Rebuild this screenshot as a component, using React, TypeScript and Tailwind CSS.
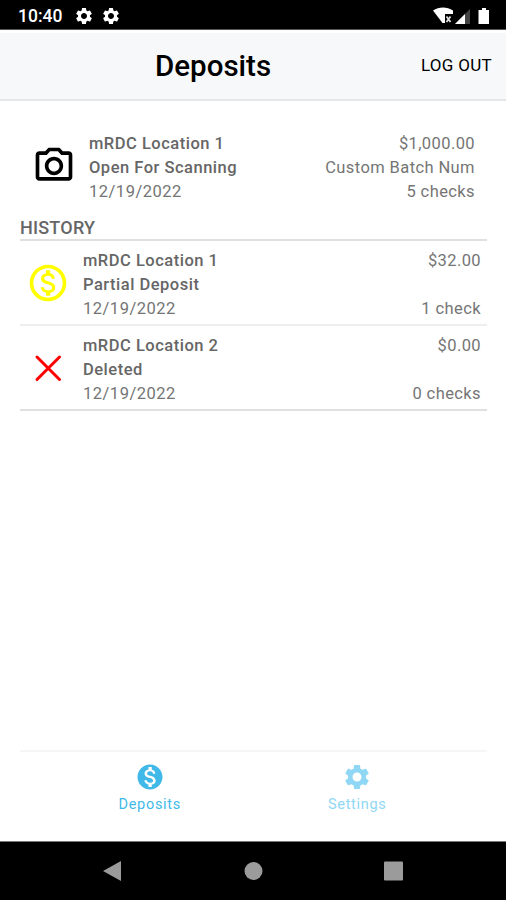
import {
  MdMonetizationOn,
  MdOutlineCameraAlt,
  MdOutlineMonetizationOn,
  MdSettings,
} from "react-icons/md"

const history = [
  { location: "mRDC Location 1", status: "Partial Deposit", date: "12/19/2022", amount: "$32.00", checks: "1 check", deleted: false },
  { location: "mRDC Location 2", status: "Deleted", date: "12/19/2022", amount: "$0.00", checks: "0 checks", deleted: true },
]

function StatusBar() {
  return (
    <div className="flex h-[30px] shrink-0 items-center border-b border-[#555] bg-black pl-[18px] pr-[15px] pt-[2px] text-white">
      <span className="w-[56px] pt-[2px] text-[17.500px] font-medium leading-none">10:40</span>
      <MdSettings className="h-5 w-5" />
      <MdSettings className="ml-[7px] h-5 w-5" />
      <svg className="ml-auto" width="58" height="18" viewBox="0 0 58 18">
        {/* wifi */}
        <path d="M0 3.500C6-.5 14-.5 20 3.500V7H12V16H9.500Z" fill="white" />
        <path d="M13.500 9.500L17.500 15M17.500 9.500L13.500 15" stroke="#ddd" strokeWidth="1.8" />
        {/* signal */}
        <path d="M22 17L37 2V17Z" fill="#444" />
        <path d="M22 17L32 7V17Z" fill="white" />
        {/* battery */}
        <path d="M45.500 3H49V1H53V3H56V17H45.500Z" fill="white" />
      </svg>
    </div>
  )
}

function Header() {
  return (
    <header className="flex h-[71px] shrink-0 items-center border-b-2 border-t-[3px] border-b-[#e4e6e8] border-t-white bg-[#f7f8fa] pl-[155px] pr-[14px] text-black">
      <h1 className="whitespace-nowrap pt-[2px] text-[29.500px] font-medium leading-none">Deposits</h1>
      <button className="ml-auto whitespace-nowrap text-[17px] tracking-[0.300px]">LOG OUT</button>
    </header>
  )
}

export default function App() {
  return (
    <div className="flex h-[900px] w-[506px] flex-col overflow-hidden bg-white font-[Roboto,sans-serif] text-[#757575]">
      <StatusBar />
      <Header />

      <main className="ml-[20px] mr-[19px] flex flex-1 flex-col text-[16.500px] leading-6 tracking-[0.400px]">
        {/* Open batch */}
        <section className="mt-[31px] flex h-[72px] pr-[12px]">
          <div className="flex w-[69px] items-center pl-[12px] text-black">
            <MdOutlineCameraAlt className="mb-[4px] h-[44px] w-[44px]" />
          </div>
          <div className="font-medium tracking-[0.500px] text-[#666]">
            <p>mRDC Location 1</p>
            <p>Open For Scanning</p>
            <p className="font-normal text-[#757575]">12/19/2022</p>
          </div>
          <div className="ml-auto text-right">
            <p>$1,000.00</p>
            <p>Custom Batch Num</p>
            <p>5 checks</p>
          </div>
        </section>

        <h2 className="mt-[12px] h-[25px] border-b-2 border-[#e0e0e0] text-[18px] font-medium tracking-[0.200px] text-[#666]">HISTORY</h2>

        {history.map((item) => (
          <section
            key={item.location}
            className={`flex h-[85px] border-b-2 pr-[6px] pt-[8px] ${item.deleted ? "border-[#e0e0e0]" : "border-[#eee]"}`}
          >
            <div className="flex h-[68px] w-[63px] items-center pl-[6px]">
              {item.deleted ? (
                <svg width="44" height="44" viewBox="0 0 44 44" fill="none" stroke="#f00" strokeWidth="3" strokeLinecap="round">
                  <path d="M11 11L33.500 33.500M33.500 11L11 33.500" />
                </svg>
              ) : (
                <MdOutlineMonetizationOn className="h-[44px] w-[44px] text-[#ff0]" />
              )}
            </div>
            <div className="font-medium tracking-[0.500px] text-[#666]">
              <p>{item.location}</p>
              <p>{item.status}</p>
              <p className="font-normal text-[#757575]">{item.date}</p>
            </div>
            <div className="ml-auto flex h-[72px] flex-col justify-between text-right">
              <p>{item.amount}</p>
              <p>{item.checks}</p>
            </div>
          </section>
        ))}
      </main>

      <nav className="ml-[20px] mr-[19px] flex h-[91px] shrink-0 border-t-2 border-[#f6f6f6] pl-[26px] pr-[26px] pt-[10px] text-[14.500px] leading-5 tracking-[0.700px]">
        <a className="flex flex-1 flex-col items-center text-[#40b9e9]">
          <MdMonetizationOn className="h-[30px] w-[30px]" />
          <span className="mt-[3px]">Deposits</span>
        </a>
        <a className="flex flex-1 flex-col items-center text-[#8fd7f5]">
          <MdSettings className="h-[30px] w-[30px]" />
          <span className="mt-[3px]">Settings</span>
        </a>
      </nav>

      <footer className="flex h-[59px] shrink-0 items-center justify-center border-t border-[#777] bg-black">
        <svg width="300" height="24" viewBox="0 0 300 24" fill="#9b9b9b">
          <path d="M0 12L18 2V22Z" />
          <circle cx="150.500" cy="12" r="9" />
          <rect x="281" y="2.500" width="19" height="19" rx="1" />
        </svg>
      </footer>
    </div>
  )
}
